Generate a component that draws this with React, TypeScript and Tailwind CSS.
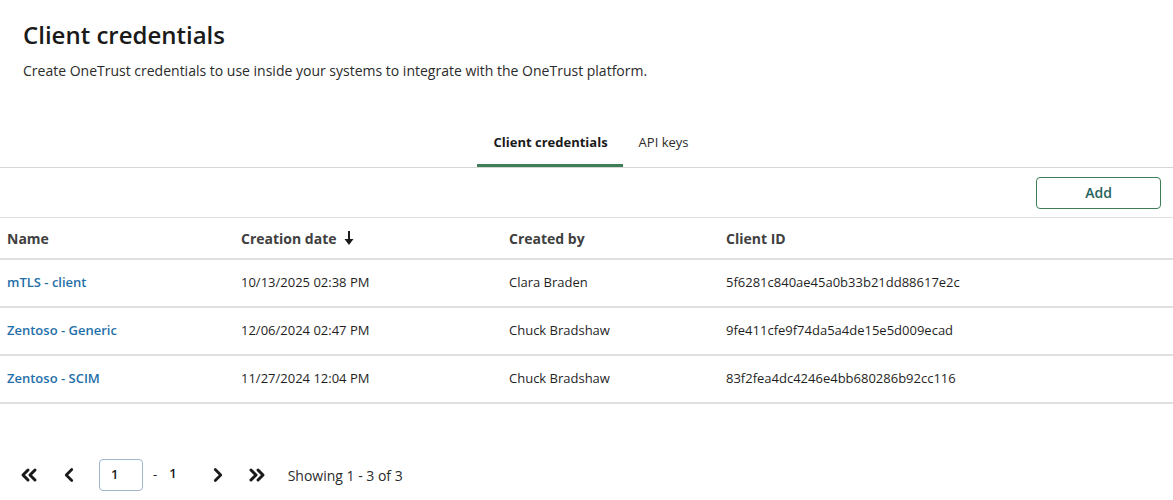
import { ChevronLeft, ChevronRight, ChevronsLeft, ChevronsRight } from "lucide-react";

const rows = [
  { name: "mTLS - client", date: "10/13/2025 02:38 PM", by: "Clara Braden", id: "5f6281c840ae45a0b33b21dd88617e2c" },
  { name: "Zentoso - Generic", date: "12/06/2024 02:47 PM", by: "Chuck Bradshaw", id: "9fe411cfe9f74da5a4de15e5d009ecad" },
  { name: "Zentoso - SCIM", date: "11/27/2024 12:04 PM", by: "Chuck Bradshaw", id: "83f2fea4dc4246e4bb680286b92cc116" },
];

function SortArrow() {
  return (
    <svg width="10" height="14" viewBox="0 0 10 14" className="text-[#1a1a1a]">
      <rect x="4" y="0" width="2" height="9" fill="currentColor" />
      <path d="M0.5 8 L9.5 8 L5 14 Z" fill="currentColor" />
    </svg>
  );
}

export default function App() {
  return (
    <div className="w-[1173px] h-[500px] bg-white text-[#1f1f1f] overflow-hidden" style={{ fontFamily: '"Open Sans", sans-serif' }}>
      {/* page header */}
      <div className="pl-[23px] pt-[19px]">
        <h1 className="text-[24px] leading-[32px] font-semibold text-[#1a1a1a]">Client credentials</h1>
        <p className="mt-[10px] text-[14px] leading-[20px] text-[#2b2b2b]">
          Create OneTrust credentials to use inside your systems to integrate with the OneTrust platform.
        </p>
      </div>

      {/* tabs */}
      <div className="mt-[39px] flex justify-center border-b border-[#d6d6d6] pl-[8px]">
        <div className="flex">
          <button className="pl-[17px] pr-[15px] h-[47px] pt-[2px] text-[13px] font-bold text-[#1a1a1a] border-b-[3px] border-[#3e7d55] -mb-px">
            Client credentials
          </button>
          <button className="px-[16px] h-[47px] pb-[1px] text-[13px] text-[#2b2b2b]">API keys</button>
        </div>
      </div>

      {/* toolbar */}
      <div className="flex justify-end h-[50px] items-center pr-[12px] border-b border-[#e0e0e0]">
        <button className="w-[125px] h-[32px] rounded-[4px] border border-[#3e7d55] text-[14px] font-semibold text-[#25625a]">
          Add
        </button>
      </div>

      {/* table */}
      <table className="w-full border-collapse text-[13px]">
        <thead>
          <tr className="h-[41px] border-b-2 border-[#e0e0e0] text-left text-[14px] text-[#404040]">
            <th className="pl-[7px] w-[241px] font-bold">Name</th>
            <th className="w-[268px] font-bold">
              <span className="inline-flex items-center gap-[7px]">
                Creation date <SortArrow />
              </span>
            </th>
            <th className="w-[217px] font-bold">Created by</th>
            <th className="font-bold">Client ID</th>
          </tr>
        </thead>
        <tbody>
          {rows.map((r) => (
            <tr key={r.id} className="h-[48px] border-b-2 border-[#e0e0e0]">
              <td className="pl-[7px] font-semibold text-[#1f6fa8]">{r.name}</td>
              <td className="text-[#1f1f1f]">{r.date}</td>
              <td className="text-[#1f1f1f]">{r.by}</td>
              <td className="text-[#1f1f1f]">{r.id}</td>
            </tr>
          ))}
        </tbody>
      </table>

      {/* pagination */}
      <div className="mt-[55px] flex items-center pl-[17px] text-[#1a1a1a]">
        <ChevronsLeft size={24} strokeWidth={3} />
        <ChevronLeft size={22} strokeWidth={3} className="ml-[17px]" />
        <div className="ml-[19px] w-[44px] h-[32px] rounded-[4px] border border-[#9fb6cc] flex items-center pl-[11px] text-[13px] font-semibold">
          1
        </div>
        <span className="ml-[10px] text-[13px]">-</span>
        <span className="ml-[12px] text-[13px] font-semibold -mt-[3px]">1</span>
        <ChevronRight size={22} strokeWidth={3} className="ml-[30px]" />
        <ChevronsRight size={24} strokeWidth={3} className="ml-[16px]" />
        <span className="ml-[19px] text-[14px] text-[#2b2b2b]">Showing 1 - 3 of 3</span>
      </div>
    </div>
  );
}
